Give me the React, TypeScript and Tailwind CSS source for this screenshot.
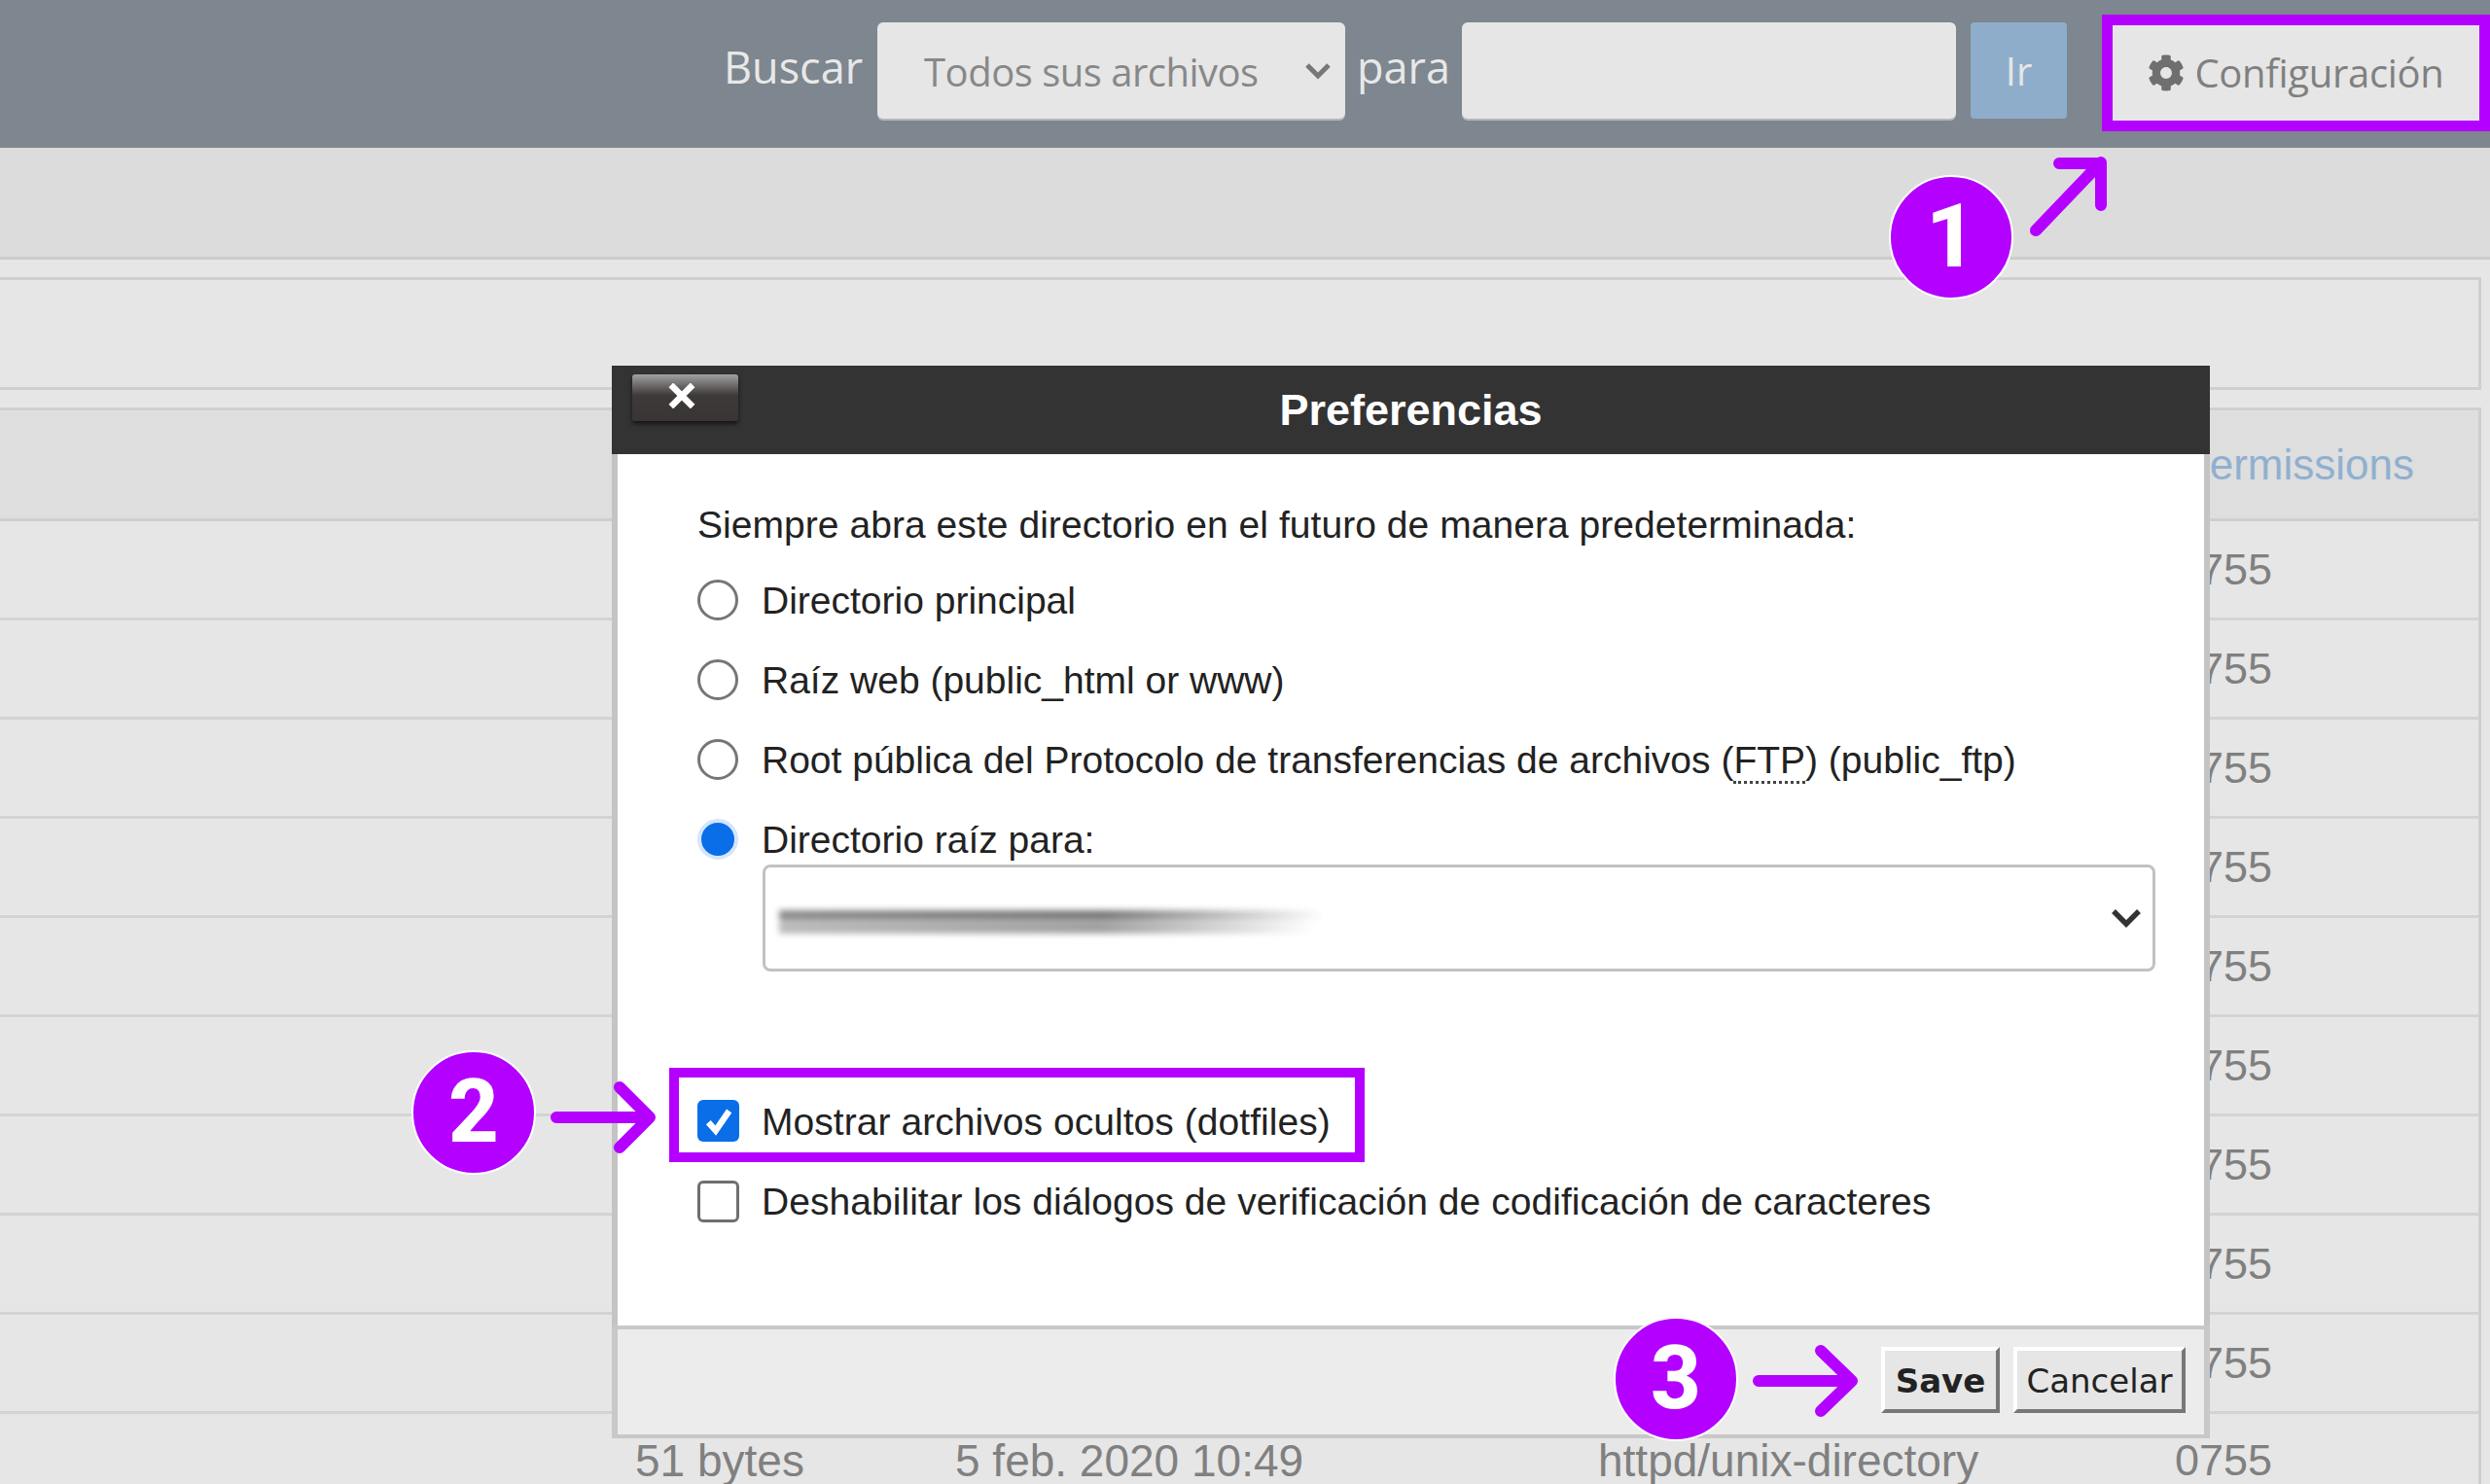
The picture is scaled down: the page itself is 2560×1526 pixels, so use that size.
import { FaCog } from 'react-icons/fa';

const rowCount = 10;

function Radio({ checked = false }: { checked?: boolean }) {
  if (checked) {
    return (
      <span className="w-[42px] h-[42px] shrink-0 rounded-full bg-[#0a6ee8] border-[4px] border-[#d4e6fb]" />
    );
  }
  return <span className="w-[42px] h-[42px] shrink-0 rounded-full bg-white border-[3px] border-[#767676]" />;
}

function Badge({ n, className }: { n: number; className: string }) {
  return (
    <div
      className={`absolute w-[128px] h-[128px] rounded-full bg-[#b400ff] border-[2px] border-white flex items-center justify-center text-white font-['Roboto',sans-serif] font-extrabold text-[90px] leading-none ${className}`}
    >
      {n}
    </div>
  );
}

function OptionRow({ children, checked }: { children: React.ReactNode; checked?: boolean }) {
  return (
    <label className="flex items-center gap-[24px] h-[44px]">
      <Radio checked={checked} />
      <span className="pt-[2px]">{children}</span>
    </label>
  );
}

export default function App() {
  return (
    <div className="relative w-full h-[1526px] overflow-hidden bg-[#e6e6e6] font-['Liberation_Sans',sans-serif]">
      {/* toolbar */}
      <div className="h-[152px] bg-[#7e868f] flex justify-end items-start pt-[15px] font-['Open_Sans',sans-serif]">
        <span className="mt-[24px] mr-[15px] text-[45px] leading-[60px] text-[#e8e8e8]">Buscar</span>
        <div className="mt-[8px] w-[481px] h-[99px] rounded-[6px] bg-[#e6e6e6] shadow-[0_2px_0_#b5b8bc] flex items-center justify-between pl-[48px] pr-[15px] text-[40px] text-[#888888] tracking-[-0.5px]">
          <span className="pt-[2px]">Todos sus archivos</span>
          <svg width="26" height="18" viewBox="0 0 26 18" fill="none" stroke="#777" strokeWidth="5">
            <path d="M2 3l11 11L24 3" />
          </svg>
        </div>
        <span className="mt-[24px] mx-[12px] text-[45px] leading-[60px] text-[#e8e8e8]">para</span>
        <div className="mt-[8px] w-[508px] h-[99px] rounded-[6px] bg-[#e6e6e6] shadow-[0_2px_0_#b5b8bc]" />
        <div className="mt-[8px] ml-[15px] w-[99px] h-[99px] rounded-[4px] bg-[#8eadcb] flex items-center justify-center text-[40px] text-[#e6e6e6]">
          Ir
        </div>
        <div className="ml-[36px] w-[399px] h-[120px] border-[11px] border-[#b400ff] bg-[#e6e6e6] flex items-center justify-center gap-[10px] text-[40px] text-[#808080] tracking-[-0.3px]">
          <FaCog className="w-[38px] h-[38px] text-[#6f6f6f]" />
          <span>Configuración</span>
        </div>
      </div>

      {/* breadcrumb strip */}
      <div className="h-[115px] bg-[#dcdcdc] border-b-[3px] border-[#cccccc]" />

      {/* actions panel + table */}
      <div className="mt-[18px] mr-[9px] h-[116px] border-y-[3px] border-r-[3px] border-[#cfcfcf] bg-[#e6e6e6]" />
      <div className="mt-[18px] mr-[9px] border-r-[3px] border-[#cfcfcf]">
        <div className="h-[117px] bg-[#dedede] border-y-[3px] border-[#cfcfcf] flex items-center justify-end pr-[66px] text-[44px] text-[#8fb0d0]">
          Permissions
        </div>
        {Array.from({ length: rowCount }).map((_, i) => (
          <div key={i} className="h-[102px] border-b-[3px] border-[#d3d3d3] grid grid-cols-[653px_329px_661px_593px_1fr] items-center text-[45px] leading-none whitespace-nowrap text-[#808080]">
            {i === rowCount - 1 ? (
              <>
                <span className="col-start-2 -translate-y-[2px] text-[46px]">51 bytes</span>
                <span className="-translate-y-[2px] text-[46px]">5 feb. 2020 10:49</span>
                <span className="-translate-y-[2px] text-[46px]">httpd/unix-directory</span>
                <span className="-translate-y-[2px]">0755</span>
              </>
            ) : (
              <span className="col-start-5">0755</span>
            )}
          </div>
        ))}
      </div>

      {/* preferencias dialog */}
      <div className="absolute left-[629px] top-[376px] w-[1643px] h-[1103px] flex flex-col">
        <div className="relative h-[91px] shrink-0 bg-[#333333] flex items-center justify-center text-white font-bold text-[45px]">
          <div className="absolute left-[21px] top-[9px] w-[109px] h-[48px] rounded-[3px] bg-linear-to-b from-[#a3a3a3] via-[#3f3a3a] via-45% to-[#3a3535] shadow-[0_3px_4px_rgba(0,0,0,0.6)] flex items-start justify-center pt-[9px] pr-[8px]">
            <svg width="28" height="26" viewBox="0 0 30 28" fill="none" stroke="white" strokeWidth="7">
              <path d="M3 2l24 24M27 2L3 26" />
            </svg>
          </div>
          Preferencias
        </div>
        <div className="flex-1 bg-white border-x-[6px] border-[#c4c4c4] pl-[82px] pt-[50px] text-[39px] leading-[44px] text-[#222222] flex flex-col">
          <p className="pt-[1px] tracking-[0.05px]">Siempre abra este directorio en el futuro de manera predeterminada:</p>
          <div className="mt-[33px] flex flex-col gap-[38px]">
            <OptionRow>Directorio principal</OptionRow>
            <OptionRow>Raíz web (public_html or www)</OptionRow>
            <OptionRow>
              Root pública del Protocolo de transferencias de archivos (
              <abbr className="no-underline border-b-[3px] border-dotted border-[#444444]">FTP</abbr>) (public_ftp)
            </OptionRow>
            <OptionRow checked>Directorio raíz para:</OptionRow>
          </div>
          <div className="mt-[4px] ml-[67px] w-[1432px] h-[110px] shrink-0 rounded-[8px] border-[3px] border-[#c2c2c2] flex items-center justify-between pl-[14px] pr-[11px]">
            <div className="mt-[8px] flex flex-col gap-[1px] blur-[3px]">
              <div className="w-[560px] h-[10px] bg-linear-to-r from-[#8a8a8a] via-[#777777] via-60% to-white" />
              <div className="w-[550px] h-[13px] bg-linear-to-r from-[#bbbbbb] via-[#a0a0a0] via-60% to-white" />
            </div>
            <svg width="32" height="22" viewBox="0 0 32 22" fill="none" stroke="#333" strokeWidth="5.5">
              <path d="M3 4l13 13L29 4" />
            </svg>
          </div>
          <label className="mt-[99px] -ml-[29px] w-[715px] h-[97px] shrink-0 border-[10px] border-[#b400ff] pl-[19px] pt-[12px] flex items-center gap-[23px]">
            <span className="w-[43px] h-[43px] shrink-0 rounded-[6px] bg-[#0a6ee8] flex items-center justify-center">
              <svg width="32" height="32" viewBox="0 0 30 30" fill="none" stroke="white" strokeWidth="6">
                <path d="M5 16l7 8L25 5" />
              </svg>
            </span>
            <span className="pt-[2px] tracking-[0.05px]">Mostrar archivos ocultos (dotfiles)</span>
          </label>
          <label className="mt-[18px] h-[44px] shrink-0 flex items-center gap-[23px]">
            <span className="w-[43px] h-[43px] shrink-0 rounded-[6px] bg-white border-[3px] border-[#6f6f6f]" />
            <span className="pt-[2px] tracking-[0.05px]">Deshabilitar los diálogos de verificación de codificación de caracteres</span>
          </label>
        </div>
        <div className="h-[116px] shrink-0 bg-[#ececec] border-x-[6px] border-y-[4px] border-[#c8c8c8] flex items-start justify-end gap-[14px] pt-[18px] pr-[19px] font-['DejaVu_Sans',sans-serif] text-[34px] text-[#222222]">
          <div className="w-[122px] h-[68px] pt-[2px] bg-[#e6e6e6] border-[4px] border-white border-r-[#777777] border-b-[#777777] font-bold flex items-center justify-center">
            Save
          </div>
          <div className="w-[177px] h-[68px] pt-[2px] bg-[#e6e6e6] border-[4px] border-white border-r-[#777777] border-b-[#777777] flex items-center justify-center">
            Cancelar
          </div>
        </div>
      </div>

      {/* annotations */}
      <Badge n={1} className="left-[1942px] top-[180px]" />
      <svg className="absolute left-[2080px] top-[155px]" width="95" height="95" viewBox="0 0 95 95" fill="none" stroke="#b400ff" strokeWidth="12" strokeLinecap="round" strokeLinejoin="round">
        <path d="M13 82L80 12M37 13h43l0 43" />
      </svg>
      <Badge n={2} className="left-[423px] top-[1080px]" />
      <svg className="absolute left-[558px] top-[1105px]" width="120" height="88" viewBox="0 0 120 88" fill="none" stroke="#b400ff" strokeWidth="12" strokeLinecap="round" strokeLinejoin="round">
        <path d="M14 44h96M79 13l31 31-31 31" />
      </svg>
      <Badge n={3} className="left-[1659px] top-[1354px]" />
      <svg className="absolute left-[1796px] top-[1376px]" width="120" height="88" viewBox="0 0 120 88" fill="none" stroke="#b400ff" strokeWidth="12" strokeLinecap="round" strokeLinejoin="round">
        <path d="M12 44h96M76 13l32 31-32 31" />
      </svg>
    </div>
  );
}
